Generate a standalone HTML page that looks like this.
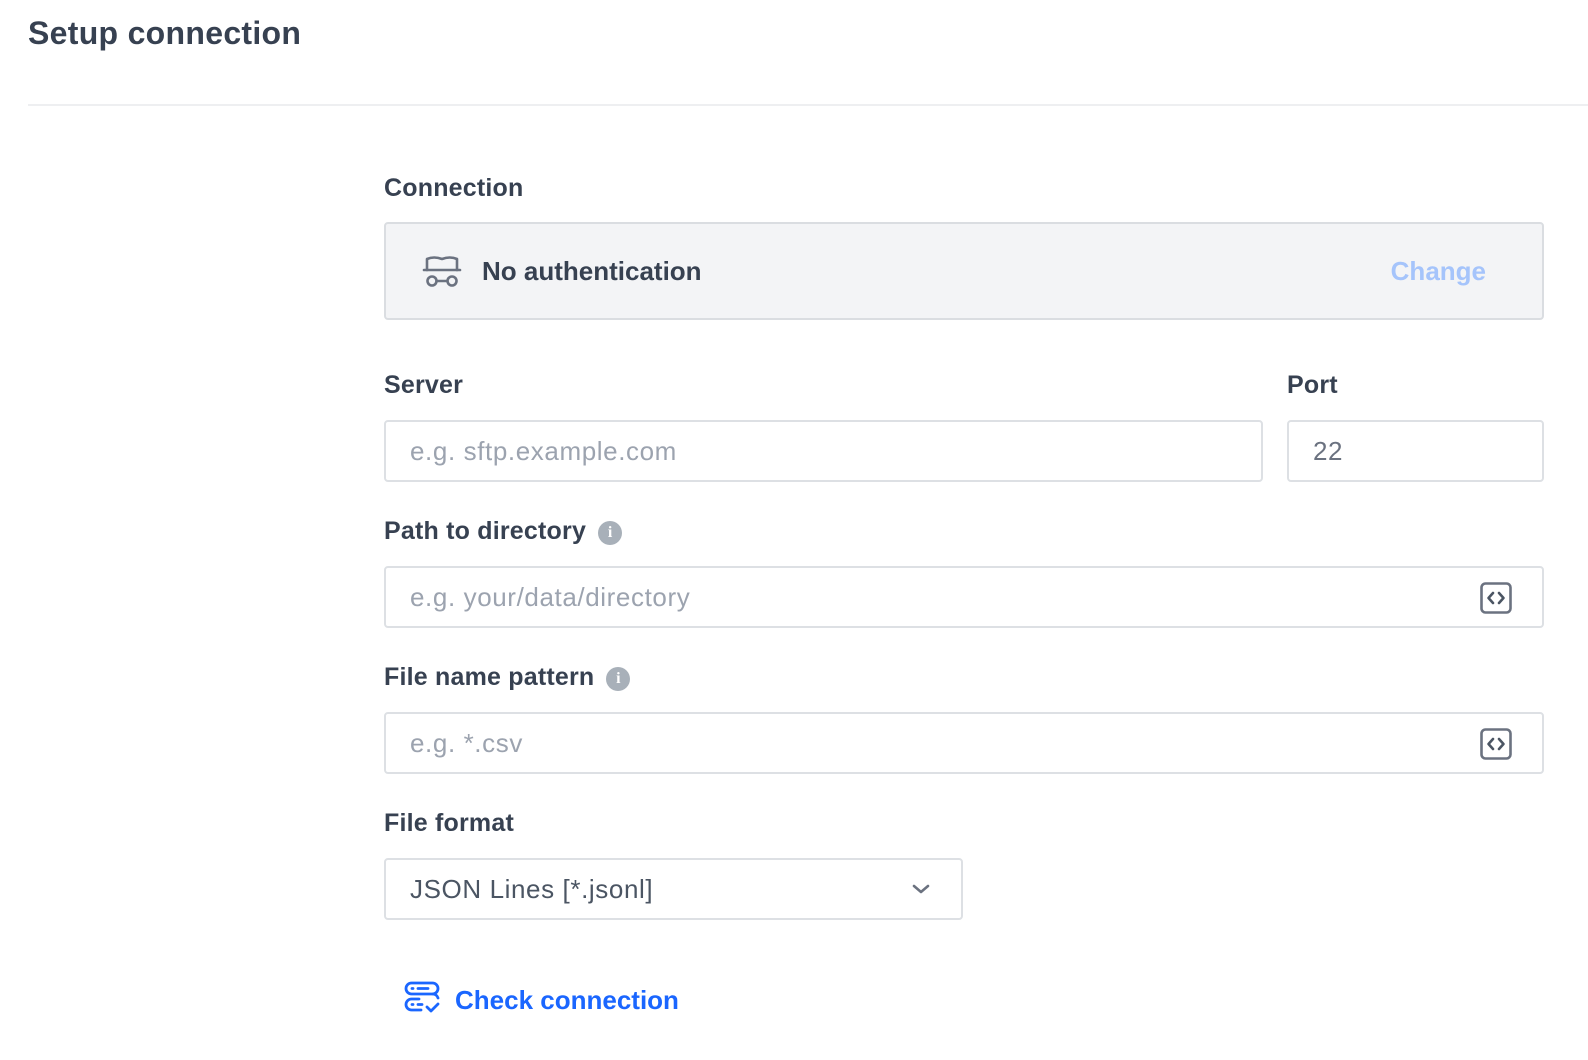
<!DOCTYPE html>
<html><head><meta charset="utf-8"><style>
*{box-sizing:border-box;margin:0;padding:0}
body{width:1588px;height:1060px;background:#fff;font-family:"Liberation Sans",sans-serif;position:relative;overflow:hidden;color:#374151}
.a{position:absolute}
.t{left:28px;top:15px;font-size:32px;font-weight:bold;color:#374151;letter-spacing:0.3px}
.hr{left:28px;top:104px;width:1560px;height:2px;background:#eeeff1}
.lbl{font-size:25px;font-weight:bold;color:#374151;line-height:30px;white-space:nowrap;letter-spacing:0.2px}
.in{border:2px solid #dde0e4;border-radius:4px;height:62px;font-size:26px;letter-spacing:0.6px;color:#9ca3af;padding-left:24px;line-height:58px;background:#fff}
.info{display:inline-block;width:24px;height:24px;border-radius:50%;background:#a8b0b9;color:#fff;font-size:16px;font-weight:bold;text-align:center;line-height:24px;vertical-align:2px;margin-left:12px;font-family:"Liberation Serif",serif;letter-spacing:0}
.code{right:30px;top:14px}
</style></head><body>
<div class="a t">Setup connection</div>
<div class="a hr"></div>

<div class="a lbl" style="left:384px;top:173px">Connection</div>
<div class="a" style="left:384px;top:222px;width:1160px;height:98px;background:#f3f4f6;border:2px solid #dadde1;border-radius:4px">
  <svg class="a" style="left:36px;top:30px" width="40" height="36" viewBox="0 0 40 36">
    <g fill="none" stroke="#6b7280" stroke-width="2.6" stroke-linecap="round" stroke-linejoin="round">
      <path d="M5 16 L5 5 Q12 2 20 5 Q28 2 35 5 L35 16"/>
      <path d="M2 16 H38"/>
      <circle cx="10" cy="27" r="4.5"/><circle cx="30" cy="27" r="4.5"/>
      <path d="M14.5 27 H25.5"/>
    </g>
  </svg>
  <div class="a" style="left:96px;top:32px;font-size:26px;font-weight:bold;color:#374151">No authentication</div>
  <div class="a" style="right:56px;top:32px;font-size:26px;font-weight:bold;color:#a5c4fb">Change</div>
</div>

<div class="a lbl" style="left:384px;top:370px">Server</div>
<div class="a lbl" style="left:1287px;top:370px">Port</div>
<div class="a in" style="left:384px;top:420px;width:879px">e.g. sftp.example.com</div>
<div class="a in" style="left:1287px;top:420px;width:257px;color:#6b7280">22</div>

<div class="a lbl" style="left:384px;top:516px">Path to directory<span class="info">i</span></div>
<div class="a in" style="left:384px;top:566px;width:1160px">e.g. your/data/directory
  <svg class="a code" width="32" height="32" viewBox="0 0 32 32"><rect x="1.5" y="1.5" width="29" height="29" rx="4" fill="none" stroke="#6b7280" stroke-width="2.6"/><path d="M13 11 L8.5 16 L13 21 M19 11 L23.5 16 L19 21" fill="none" stroke="#4b5563" stroke-width="2.6" stroke-linecap="round" stroke-linejoin="round"/></svg>
</div>

<div class="a lbl" style="left:384px;top:662px">File name pattern<span class="info">i</span></div>
<div class="a in" style="left:384px;top:712px;width:1160px">e.g. *.csv
  <svg class="a code" width="32" height="32" viewBox="0 0 32 32"><rect x="1.5" y="1.5" width="29" height="29" rx="4" fill="none" stroke="#6b7280" stroke-width="2.6"/><path d="M13 11 L8.5 16 L13 21 M19 11 L23.5 16 L19 21" fill="none" stroke="#4b5563" stroke-width="2.6" stroke-linecap="round" stroke-linejoin="round"/></svg>
</div>

<div class="a lbl" style="left:384px;top:808px">File format</div>
<div class="a in" style="left:384px;top:858px;width:579px;color:#4b5563">JSON Lines [*.jsonl]
  <svg class="a" style="right:30px;top:22px" width="20" height="14" viewBox="0 0 20 14"><path d="M3 4 L10 10 L17 4" fill="none" stroke="#6b7280" stroke-width="2.6" stroke-linecap="round" stroke-linejoin="round"/></svg>
</div>

<svg class="a" style="left:404px;top:980px" width="38" height="36" viewBox="0 0 38 36">
  <g fill="none" stroke="#1a66ff" stroke-width="2.8" stroke-linecap="round" stroke-linejoin="round">
    <rect x="2" y="3" width="32" height="11" rx="5.5"/>
    <path d="M15 19 H7.5 A5.5 5.5 0 0 0 7.5 30 H17"/>
    <path d="M29 14 A5.5 5.5 0 0 1 34 18"/>
    <path d="M8 8.5 H9 M14 8.5 H24 M8 24.5 H9 M14 24.5 H18"/>
    <path d="M23 27 L27 31 L34 24"/>
  </g>
</svg>
<div class="a" style="left:455px;top:985px;font-size:26px;font-weight:bold;color:#1a66ff">Check connection</div>
</body></html>
